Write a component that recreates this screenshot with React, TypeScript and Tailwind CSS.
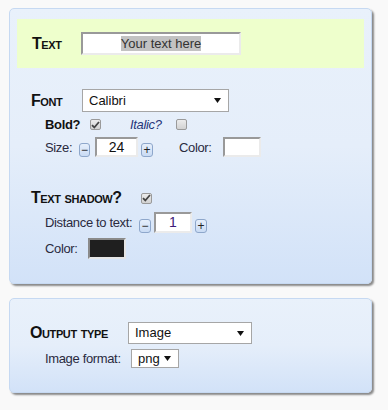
import React from 'react';

const heading = 'font-["Liberation_Sans",Arial,sans-serif] font-bold text-[16px] tracking-[-0.4px] [font-variant:small-caps] text-[#111] leading-none';
const label = 'text-[13px] tracking-[-0.35px] text-[#2a2a3e] leading-none whitespace-nowrap';
const inset = 'bg-white border-2 border-t-[#999] border-l-[#999] border-r-[#ebebeb] border-b-[#ebebeb]';

const Arrow = () => (
  <svg width="7" height="5" viewBox="0 0 7 5" className="shrink-0">
    <path d="M0 0 H7 L3.5 5 Z" fill="#111" />
  </svg>
);

const Select = ({ value, width, height }: { value: string; width: string; height: string }) => (
  <div className={`${width} ${height} bg-white border border-[#a6a6a6] flex items-center justify-between pl-[6px] pr-[7px] text-[13px] text-[#111]`}>
    <span>{value}</span>
    <Arrow />
  </div>
);

const Check = ({ checked }: { checked?: boolean }) => (
  <span className="w-[11px] h-[11px] rounded-[2px] border border-[#9a9a9a] bg-gradient-to-b from-[#ececec] to-[#d2d2d2] flex items-center justify-center">
    {checked && (
      <svg width="9" height="8" viewBox="0 0 9 8">
        <path d="M1 4.2 L3.3 6.5 L8 1" fill="none" stroke="#444" strokeWidth="1.8" />
      </svg>
    )}
  </span>
);

const StepBtn = ({ sign, w }: { sign: string; w: string }) => (
  <span className={`${w} h-[14px] self-end rounded-[3px] border border-[#8ea7cb] bg-gradient-to-b from-[#e6effb] to-[#c9dbf4] flex items-center justify-center text-[12px] leading-none text-[#222]`}>
    {sign}
  </span>
);

const panel = 'w-[363px] rounded-[5px] border border-[#c6d9f2] bg-gradient-to-b from-[#e9f1fb] via-[#e5eefa] to-[#d2e2f8] shadow-[2px_2px_2px_rgba(0,0,0,0.45)]';

export default function App() {
  return (
    <div className='min-h-[410px] bg-[#f9f9f9] pt-[8px] pl-[9px] font-["Liberation_Sans",Arial,sans-serif]'>
      <div className={`${panel} pt-[10px] px-[7px] pb-[24px]`}>
        <div className="h-[49px] bg-[#eeffcc] flex items-center pl-[15px]">
          <span className={`${heading} w-[49px]`}>Text</span>
          <div className={`${inset} w-[160px] h-[23px] flex items-center justify-center`}>
            <span className="bg-[#c2c2c2] text-[13px] leading-[15px] text-[#333]">Your text here</span>
          </div>
        </div>

        {/* font */}
        <div className="mt-[21px] pl-[14px] flex items-center">
          <span className={`${heading} w-[51px]`}>Font</span>
          <Select value="Calibri" width="w-[147px]" height="h-[23px]" />
        </div>
        <div className="mt-[7px] pl-[28px] flex items-center h-[11px]">
          <span className={`${label} font-bold text-[#111] w-[45px]`}>Bold?</span>
          <Check checked />
          <span className={`${label} italic text-[#27367a] ml-[29px] w-[46px]`}>Italic?</span>
          <Check />
        </div>
        <div className="mt-[7px] pl-[28px] flex items-center h-[20px]">
          <span className={`${label} w-[34px]`}>Size:</span>
          <StepBtn sign="−" w="w-[11px]" />
          <div className={`${inset} ml-[5px] w-[43px] h-[20px] flex items-center justify-center text-[14px] text-[#111]`}>24</div>
          <span className="ml-[3px] flex self-end"><StepBtn sign="+" w="w-[12px]" /></span>
          <span className={`${label} ml-[26px] w-[44px]`}>Color:</span>
          <div className={`${inset} w-[38px] h-[20px]`} />
        </div>

        {/* text shadow */}
        <div className="mt-[33px] pl-[14px] flex items-center h-[16px]">
          <span className={`${heading} w-[110px]`}>Text shadow?</span>
          <Check checked />
        </div>
        <div className="mt-[6px] pl-[28px] flex items-center h-[21px]">
          <span className={`${label} w-[94px]`}>Distance to text:</span>
          <StepBtn sign="−" w="w-[12px]" />
          <div className={`${inset} ml-[3px] w-[38px] h-[21px] flex items-center justify-center text-[14px] text-[#3d1a78]`}>1</div>
          <span className="ml-[3px] flex self-end"><StepBtn sign="+" w="w-[12px]" /></span>
        </div>
        <div className="mt-[5px] pl-[28px] flex items-center h-[21px]">
          <span className={`${label} w-[43px]`}>Color:</span>
          <div className="w-[38px] h-[21px] bg-[#1f1f1f] border-2 border-t-[#8a8a8a] border-l-[#8a8a8a] border-r-[#e5e5e5] border-b-[#e5e5e5]" />
        </div>
      </div>

      <div className={`${panel} mt-[14px] pt-[23px] px-[7px] pb-[24px]`}>
        <div className="pl-[13px] flex items-center">
          <span className={`${heading} w-[98px]`}>Output type</span>
          <Select value="Image" width="w-[124px]" height="h-[22px]" />
        </div>
        <div className="mt-[5px] pl-[28px] flex items-center">
          <span className={`${label} w-[86px]`}>Image format:</span>
          <Select value="png" width="w-[48px]" height="h-[19px]" />
        </div>
      </div>
    </div>
  );
}
